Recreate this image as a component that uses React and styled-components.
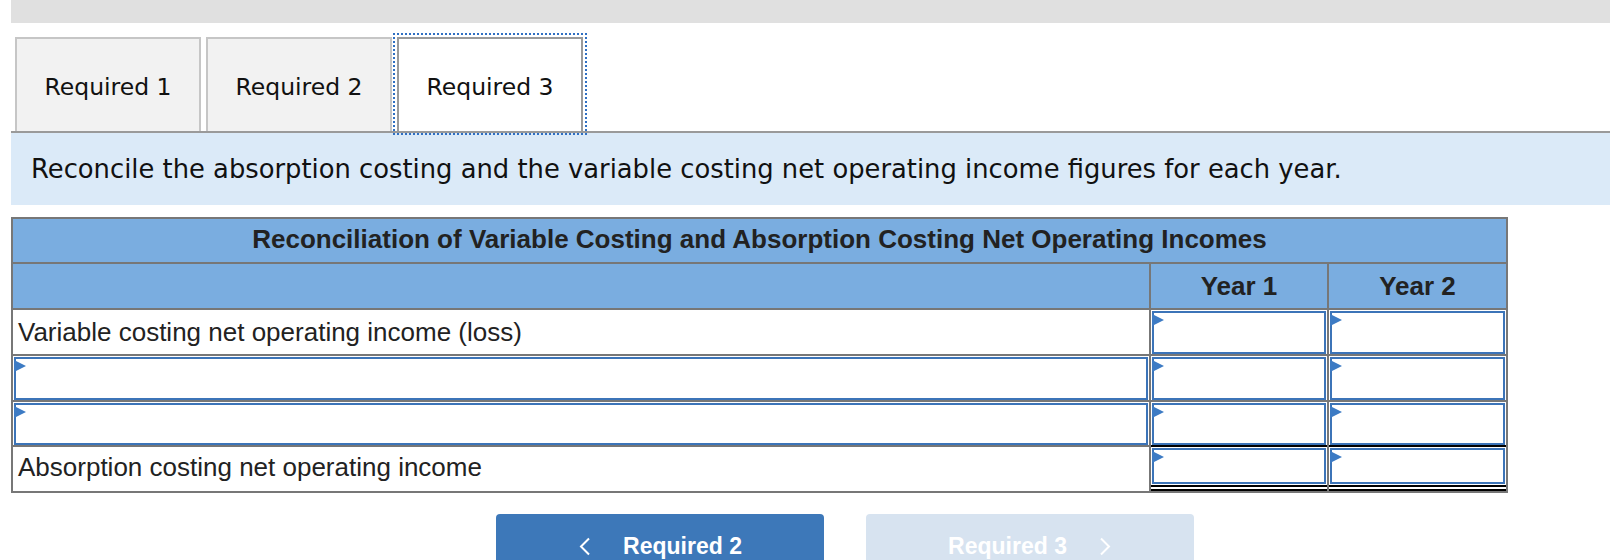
import styled, { createGlobalStyle } from 'styled-components'

const GlobalStyle = createGlobalStyle`
  body {
    margin: 0;
    background: #fff;
  }
`

const Page = styled.div`
  padding-left: 11px;
  font-family: "DejaVu Sans", Verdana, sans-serif;
  color: #111;
`

const TopBar = styled.div`
  height: 23px;
  background: #e0e0e0;
`

const TabRow = styled.div`
  display: flex;
  align-items: flex-end;
  gap: 5px;
  padding: 14px 0 0 4px;
  border-bottom: 2px solid #9a9a9a;
`

const Tab = styled.div`
  width: 186px;
  height: 94px;
  box-sizing: border-box;
  padding-top: 4px;
  display: flex;
  align-items: center;
  justify-content: center;
  font-size: 23.5px;
  background: ${(p) => (p.$active ? '#fff' : '#f2f2f2')};
  border: 2px solid ${(p) => (p.$active ? '#9a9a9a' : '#c6c6c6')};
  border-bottom: none;
  ${(p) => p.$active && 'outline: 2px dotted #2f6fc2; outline-offset: 2px;'}
`

const Banner = styled.div`
  height: 72px;
  background: #dbeaf8;
  display: flex;
  align-items: center;
  padding-left: 20px;
  font-size: 25.8px;
`

const Grid = styled.div`
  margin-top: 12px;
  width: 1497px;
  box-sizing: border-box;
  display: grid;
  grid-template-columns: 1136px 176px 177px;
  grid-template-rows: 43px 44px 44px 44px 43px 44px;
  gap: 2px;
  padding: 2px;
  background: #777;
  font-family: "Liberation Sans", Arial, sans-serif;
  font-size: 26px;
  color: #222;
`

const TitleCell = styled.div`
  grid-column: 1 / -1;
  background: #7aade0;
  font-weight: bold;
  display: flex;
  align-items: center;
  justify-content: center;
  padding-bottom: 2px;
`

const HeadCell = styled.div`
  background: #7aade0;
  font-weight: bold;
  display: flex;
  align-items: center;
  justify-content: center;
`

const LabelCell = styled.div`
  background: #fff;
  display: flex;
  align-items: center;
  padding-left: 5px;
  padding-bottom: ${(p) => (p.$total ? '3px' : '0')};
`

const InputCell = styled.div`
  background: #fff;
  display: flex;
  padding: 1px 1px ${(p) => (p.$total ? '1px' : '0')};
  box-sizing: border-box;
  ${(p) =>
    p.$total &&
    `
    border-bottom: 6px double #000;
    box-shadow: 0 -2px 0 #000;
  `}
`

const Field = styled.div`
  flex: 1;
  position: relative;
  border: 2px solid #3c74b8;
`

const Flag = styled.span`
  position: absolute;
  left: -2px;
  top: 1px;
  width: 0;
  height: 0;
  border-top: 6.5px solid transparent;
  border-bottom: 6.5px solid transparent;
  border-left: 12px solid #3d7bc4;
`

const NavRow = styled.div`
  display: flex;
  gap: 42px;
  padding: 21px 0 0 485px;
`

const NavButton = styled.div`
  width: 328px;
  height: 64px;
  border-radius: 4px;
  background: ${(p) => (p.$dim ? '#d7e3f0' : '#3d78b9')};
  color: #fff;
  font-family: "Liberation Sans", Arial, sans-serif;
  font-weight: bold;
  font-size: 23px;
  display: flex;
  align-items: center;
  justify-content: center;
  gap: 32px;
`

const Chevron = ({ dir }) => (
  <svg width="13" height="19" viewBox="0 0 13 19">
    <path
      d={dir === 'left' ? 'M11 1.5 L3 9.5 L11 17.5' : 'M2 1.5 L10 9.5 L2 17.5'}
      fill="none"
      stroke="#fff"
      strokeWidth="2"
    />
  </svg>
)

const Input = () => (
  <Field>
    <Flag />
  </Field>
)

const App = () => {
  return (
    <Page>
      <GlobalStyle />
      <TopBar />
      <TabRow>
        <Tab>Required 1</Tab>
        <Tab>Required 2</Tab>
        <Tab $active>Required 3</Tab>
      </TabRow>
      <Banner>
        Reconcile the absorption costing and the variable costing net operating income figures for each year.
      </Banner>
      <Grid>
        <TitleCell>Reconciliation of Variable Costing and Absorption Costing Net Operating Incomes</TitleCell>
        <HeadCell />
        <HeadCell>Year 1</HeadCell>
        <HeadCell>Year 2</HeadCell>

        <LabelCell>Variable costing net operating income (loss)</LabelCell>
        <InputCell><Input /></InputCell>
        <InputCell><Input /></InputCell>

        <InputCell><Input /></InputCell>
        <InputCell><Input /></InputCell>
        <InputCell><Input /></InputCell>

        <InputCell><Input /></InputCell>
        <InputCell><Input /></InputCell>
        <InputCell><Input /></InputCell>

        <LabelCell $total>Absorption costing net operating income</LabelCell>
        <InputCell $total><Input /></InputCell>
        <InputCell $total><Input /></InputCell>
      </Grid>
      <NavRow>
        <NavButton>
          <Chevron dir="left" />
          Required 2
        </NavButton>
        <NavButton $dim>
          Required 3
          <Chevron dir="right" />
        </NavButton>
      </NavRow>
    </Page>
  )
}

export default App
